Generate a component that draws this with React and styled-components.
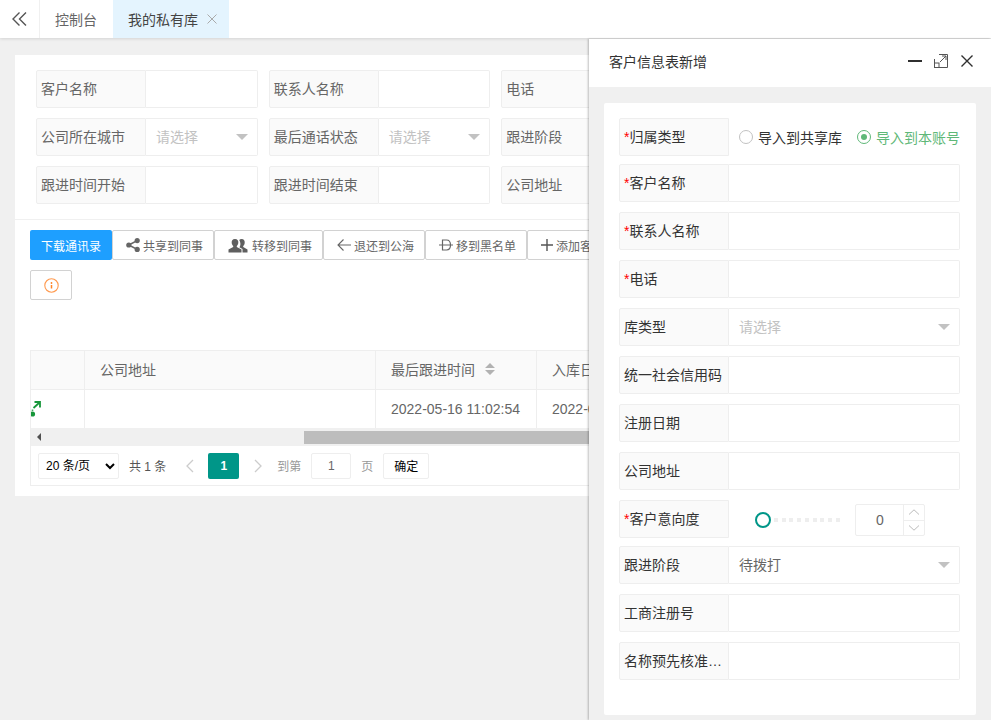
import React from 'react';
import styled, { createGlobalStyle } from 'styled-components';

const GlobalStyle = createGlobalStyle`
  html, body {
    margin: 0;
    padding: 0;
    background: #f0f0f0;
  }
  * {
    box-sizing: border-box;
  }
  body {
    font-family: "Liberation Sans", "Noto Sans CJK SC", sans-serif;
    font-size: 14px;
    color: #666;
  }
`;

const filterFields = [
  { label: '客户名称' },
  { label: '联系人名称' },
  { label: '电话' },
  { label: '公司所在城市', select: '请选择' },
  { label: '最后通话状态', select: '请选择' },
  { label: '跟进阶段', select: '请选择' },
  { label: '跟进时间开始' },
  { label: '跟进时间结束' },
  { label: '公司地址' },
];

const App = () => {
  return (
    <Page>
      <GlobalStyle />
      <TabBar>
        <BackTab>
          <svg width="15" height="14" viewBox="0 0 15 14" fill="none" stroke="#555" strokeWidth="1.4">
            <path d="M7.5 0.5 L1 7 L7.5 13.5" />
            <path d="M14 0.5 L7.5 7 L14 13.5" />
          </svg>
        </BackTab>
        <Tab>控制台</Tab>
        <Tab $active>
          我的私有库
          <svg width="10" height="10" viewBox="0 0 10 10" stroke="#aaa" strokeWidth="1">
            <path d="M0.5 0.5 L9.5 9.5 M9.5 0.5 L0.5 9.5" />
          </svg>
        </Tab>
      </TabBar>

      <Content>
        <Card>
          <FilterGrid>
            {filterFields.map((f) => (
              <Field key={f.label}>
                <FieldLabel $color="#666">{f.label}</FieldLabel>
                <FieldBody>
                  {f.select && <Placeholder>{f.select}</Placeholder>}
                  {f.select && <Caret />}
                </FieldBody>
              </Field>
            ))}
          </FilterGrid>

          <ToolArea>
            <Toolbar>
              <PrimaryButton>下载通讯录</PrimaryButton>
              <ToolButton>
                <svg width="14" height="14" viewBox="0 0 14 14" fill="#666" stroke="#666">
                  <circle cx="2.8" cy="7" r="2.6" stroke="none" />
                  <circle cx="11.2" cy="2.6" r="2.6" stroke="none" />
                  <circle cx="11.2" cy="11.4" r="2.6" stroke="none" />
                  <path d="M2.8 7 L11.2 2.6 M2.8 7 L11.2 11.4" strokeWidth="1.6" />
                </svg>
                共享到同事
              </ToolButton>
              <ToolButton $gap={4}>
                <svg width="20" height="15" viewBox="0 0 20 14" fill="#5f5f5f">
                  <path d="M13.5 0.5 C16 0.5 17 2.5 16.7 4.5 C16.5 6 15.8 7 15.2 7.5 L15.2 8.6 L19.5 11 L19.5 14 L14.5 14 L14.5 10.6 L11.4 8.8 C12.6 7.5 13 4.5 11.2 1.6 C11.8 0.9 12.6 0.5 13.5 0.5 Z" />
                  <path d="M7 0.5 C9.6 0.5 10.6 2.6 10.3 4.6 C10.1 6 9.4 7 8.8 7.5 L8.8 8.6 L13.5 11 L13.5 14 L0.5 14 L0.5 11 L5.2 8.6 L5.2 7.5 C4.6 7 3.9 6 3.7 4.6 C3.4 2.6 4.4 0.5 7 0.5 Z" />
                </svg>
                转移到同事
              </ToolButton>
              <ToolButton>
                <svg width="14" height="12" viewBox="0 0 14 12" fill="none" stroke="#666" strokeWidth="1.1">
                  <path d="M6.5 0.5 L1 6 L6.5 11.5 M1 6 L14 6" />
                </svg>
                退还到公海
              </ToolButton>
              <ToolButton>
                <svg width="14" height="12" viewBox="0 0 14 12" fill="none" stroke="#666" strokeWidth="1.2">
                  <path d="M3.5 1 L7.5 1 C10.3 1 11.5 3.2 11.5 6 C11.5 8.8 10.3 11 7.5 11 L3.5 11 Z M0 6 L14 6" />
                </svg>
                移到黑名单
              </ToolButton>
              <ToolButton>
                <svg width="12" height="12" viewBox="0 0 12 12" stroke="#555" strokeWidth="1.4">
                  <path d="M6 0 L6 12 M0 6 L12 6" />
                </svg>
                添加客户
              </ToolButton>
            </Toolbar>
            <InfoButton>
              <svg width="15" height="15" viewBox="0 0 15 15" fill="none">
                <circle cx="7.5" cy="7.5" r="6.7" stroke="#ff9a4f" strokeWidth="1.1" />
                <path d="M7.5 7 L7.5 10.5" stroke="#ff8426" strokeWidth="1.5" />
                <circle cx="7.5" cy="5" r="0.9" fill="#ff8426" />
              </svg>
            </InfoButton>
          </ToolArea>

          <TableWrap>
            <TableRow $head>
              <HeadCell $width={54} />
              <HeadCell $width={291}>公司地址</HeadCell>
              <HeadCell $width={161}>
                最后跟进时间
                <SortIcon viewBox="0 0 10 12" fill="#b2b2b2">
                  <path d="M5 0 L10 5 L0 5 Z M5 12 L0 7 L10 7 Z" />
                </SortIcon>
              </HeadCell>
              <HeadCell $width={200}>入库日期</HeadCell>
            </TableRow>
            <TableRow>
              <IconCell $width={54}>
                <svg width="10" height="16" viewBox="0 0 10 16" fill="none">
                  <path d="M2.5 7 L8.5 1.5 M3.5 1 L9 1 L9 6.5" stroke="#17963a" strokeWidth="1.8" />
                  <circle cx="1.5" cy="13" r="2.6" fill="#17963a" />
                  <path d="M1.5 9.8 L1.5 8.6" stroke="#17963a" strokeWidth="1.6" />
                </svg>
              </IconCell>
              <Cell $width={291} />
              <Cell $width={161}>2022-05-16 11:02:54</Cell>
              <Cell $width={200}>2022-05-16 11:02:54</Cell>
            </TableRow>
            <ScrollTrack>
              <ScrollArrow />
              <ScrollThumb />
            </ScrollTrack>
            <Pager>
              <PageSize defaultValue="20">
                <option value="10">10 条/页</option>
                <option value="20">20 条/页</option>
                <option value="50">50 条/页</option>
              </PageSize>
              <PagerText>共 1 条</PagerText>
              <PagerArrow>
                <svg width="9" height="14" viewBox="0 0 9 14" fill="none" stroke="#ccc" strokeWidth="1.3">
                  <path d="M8 1 L2 7 L8 13" />
                </svg>
              </PagerArrow>
              <CurrentPage>1</CurrentPage>
              <PagerArrow>
                <svg width="9" height="14" viewBox="0 0 9 14" fill="none" stroke="#ccc" strokeWidth="1.3">
                  <path d="M1 1 L7 7 L1 13" />
                </svg>
              </PagerArrow>
              <JumpLabel>到第</JumpLabel>
              <JumpInput defaultValue="1" />
              <JumpLabel $left={10}>页</JumpLabel>
              <JumpButton>确定</JumpButton>
            </Pager>
          </TableWrap>
        </Card>
      </Content>

      <Drawer>
        <DrawerHeader>
          <DrawerTitle>客户信息表新增</DrawerTitle>
          <DrawerActions>
            <svg width="14" height="2" viewBox="0 0 14 2" fill="#2f2f2f">
              <rect width="14" height="2" />
            </svg>
            <svg width="14" height="14" viewBox="0 0 14 14" fill="none" stroke="#555" strokeWidth="1">
              <path d="M5 0.5 L13.5 0.5 L13.5 13.5 L0.5 13.5 L0.5 5" />
              <rect x="0.5" y="9" width="4.5" height="4.5" />
              <path d="M6 8 L12 2 M8 2 L12 2 L12 6" />
            </svg>
            <svg width="13" height="12" viewBox="-1 0 13 12" stroke="#2f2f2f" strokeWidth="1.4">
              <path d="M0.5 0.5 L11.5 11.5 M11.5 0.5 L0.5 11.5" />
            </svg>
          </DrawerActions>
        </DrawerHeader>
        <DrawerBody>
          <FormCard>
            <FormRow $tight>
              <FieldLabel><Star>*</Star>归属类型</FieldLabel>
              <RadioGroup>
                <Radio />
                <RadioText>导入到共享库</RadioText>
                <Radio $on />
                <RadioText $on>导入到本账号</RadioText>
              </RadioGroup>
            </FormRow>
            <FormRow><FieldLabel><Star>*</Star>客户名称</FieldLabel><FieldBody /></FormRow>
            <FormRow><FieldLabel><Star>*</Star>联系人名称</FieldLabel><FieldBody /></FormRow>
            <FormRow><FieldLabel><Star>*</Star>电话</FieldLabel><FieldBody /></FormRow>
            <FormRow>
              <FieldLabel>库类型</FieldLabel>
              <FieldBody><Placeholder>请选择</Placeholder><Caret /></FieldBody>
            </FormRow>
            <FormRow><FieldLabel>统一社会信用码</FieldLabel><FieldBody /></FormRow>
            <FormRow><FieldLabel>注册日期</FieldLabel><FieldBody /></FormRow>
            <FormRow><FieldLabel>公司地址</FieldLabel><FieldBody /></FormRow>
            <FormRow $tight>
              <FieldLabel><Star>*</Star>客户意向度</FieldLabel>
              <SliderArea>
                <SliderTrack>
                  {Array.from({ length: 10 }).map((_, i) => <SliderDot key={i} />)}
                  <SliderThumb />
                </SliderTrack>
                <NumberBox>
                  <NumberValue>0</NumberValue>
                  <Steppers>
                    <Stepper>
                      <svg width="12" height="6" viewBox="0 0 12 6" fill="none" stroke="#bbb">
                        <path d="M1 5.5 L6 0.8 L11 5.5" />
                      </svg>
                    </Stepper>
                    <Stepper>
                      <svg width="12" height="6" viewBox="0 0 12 6" fill="none" stroke="#bbb">
                        <path d="M1 0.5 L6 5.2 L11 0.5" />
                      </svg>
                    </Stepper>
                  </Steppers>
                </NumberBox>
              </SliderArea>
            </FormRow>
            <FormRow>
              <FieldLabel>跟进阶段</FieldLabel>
              <FieldBody><SelectValue>待拨打</SelectValue><Caret /></FieldBody>
            </FormRow>
            <FormRow><FieldLabel>工商注册号</FieldLabel><FieldBody /></FormRow>
            <FormRow><FieldLabel>名称预先核准文号</FieldLabel><FieldBody /></FormRow>
          </FormCard>
        </DrawerBody>
      </Drawer>
    </Page>
  );
};

const Page = styled.div`
  position: relative;
  width: 991px;
  height: 720px;
  overflow: hidden;
  background: #f0f0f0;
`;

const TabBar = styled.div`
  display: flex;
  height: 38px;
  background: #fff;
  box-shadow: 0 1px 3px rgba(0, 0, 0, 0.12);
`;

const BackTab = styled.div`
  width: 40px;
  display: flex;
  align-items: center;
  justify-content: center;
  border-right: 1px solid #f0f0f0;
`;

const Tab = styled.div`
  display: flex;
  align-items: center;
  gap: 9px;
  padding: 0 15px;
  background: ${(p) => (p.$active ? '#e4f4fe' : '#fff')};
  color: ${(p) => (p.$active ? '#444' : '#666')};
  padding-right: ${(p) => (p.$active ? '12px' : '16px')};
`;

const Content = styled.div`
  padding: 17px 15px;
`;

const Card = styled.div`
  background: #fff;
  height: 441px;
`;

const FilterGrid = styled.div`
  display: grid;
  grid-template-columns: repeat(3, 221.67px);
  gap: 10px 11px;
  padding: 15px 21px;
  border-bottom: 1px solid #f0f0f0;
  height: 165px;
`;

const Field = styled.div`
  display: flex;
  height: 38px;
`;

const FormRow = styled(Field)`
  margin-bottom: ${(p) => (p.$tight ? '8px' : '10px')};
  &:last-child {
    margin-bottom: 0;
  }
`;

const FieldLabel = styled.div`
  flex: none;
  width: 110px;
  padding: 0 4px;
  line-height: 36px;
  background: #fafafa;
  border: 1px solid #eee;
  border-radius: 2px 0 0 2px;
  color: ${(p) => p.$color || '#333'};
  white-space: nowrap;
  overflow: hidden;
  text-overflow: ellipsis;
`;

const Star = styled.span`
  color: #f00;
`;

const FieldBody = styled.div`
  position: relative;
  flex: 1;
  display: flex;
  align-items: center;
  padding: 0 0 2px 10px;
  border: 1px solid #eee;
  border-left: none;
  border-radius: 0 2px 2px 0;
`;

const Placeholder = styled.span`
  color: #c2c2c2;
`;

const SelectValue = styled.span`
  color: #666;
`;

const Caret = styled.i`
  position: absolute;
  right: 9px;
  top: 15px;
  width: 0;
  height: 0;
  border-style: solid;
  border-width: 6px 6px 0;
  border-color: #c2c2c2 transparent transparent;
`;

const ToolArea = styled.div`
  padding: 10px 15px 0;
  height: 130px;
`;

const Toolbar = styled.div`
  display: flex;
  white-space: nowrap;
  height: 30px;
`;

const PrimaryButton = styled.button`
  height: 30px;
  padding: 0 11px;
  border: none;
  border-radius: 2px;
  background: #1e9fff;
  color: #fff;
  font: inherit;
  font-size: 12px;
`;

const ToolButton = styled.button`
  flex: none;
  display: flex;
  align-items: center;
  gap: ${(p) => p.$gap || 3}px;
  height: 30px;
  padding: 0 10px 0 13px;
  border: 1px solid #d2d2d2;
  border-radius: 2px;
  background: #fff;
  color: #666;
  font: inherit;
  font-size: 12px;
`;

const InfoButton = styled.button`
  display: flex;
  align-items: center;
  justify-content: center;
  width: 42px;
  height: 30px;
  margin-top: 10px;
  padding: 0;
  border: 1px solid #d2d2d2;
  border-radius: 2px;
  background: #fff;
`;

const TableWrap = styled.div`
  margin: 0 15px;
  border-left: 1px solid #eee;
  overflow: hidden;
`;

const TableRow = styled.div`
  display: flex;
  height: ${(p) => (p.$head ? '40px' : '38px')};
  background: ${(p) => (p.$head ? '#fafafa' : '#fff')};
  border-top: ${(p) => (p.$head ? '1px solid #eee' : 'none')};
  border-bottom: ${(p) => (p.$head ? '1px solid #eee' : 'none')};
`;

const Cell = styled.div`
  flex: none;
  display: flex;
  align-items: center;
  width: ${(p) => p.$width}px;
  padding-left: 15px;
  border-right: 1px solid #eee;
  white-space: nowrap;
  overflow: hidden;
`;

const HeadCell = styled(Cell)`
  padding-bottom: 2px;
`;

const IconCell = styled(Cell)`
  padding-left: 0;
`;

const SortIcon = styled.svg`
  width: 10px;
  height: 12px;
  margin-left: 10px;
`;

const ScrollTrack = styled.div`
  position: relative;
  height: 18px;
  background: #f0f0f0;
`;

const ScrollArrow = styled.i`
  position: absolute;
  left: 6px;
  top: 5px;
  border-style: solid;
  border-width: 4px 4px 4px 0;
  border-color: transparent #505050 transparent transparent;
`;

const ScrollThumb = styled.div`
  position: absolute;
  left: 273px;
  top: 3px;
  width: 500px;
  height: 13px;
  background: #bdbdbd;
`;

const Pager = styled.div`
  display: flex;
  align-items: center;
  height: 40px;
  padding-left: 7px;
  font-size: 12px;
  border-bottom: 1px solid #eee;
`;

const PageSize = styled.select`
  width: 81px;
  height: 26px;
  padding: 0 0 0 3px;
  border: 1px solid #eee;
  border-radius: 2px;
  background: #fff;
  color: #000;
  font-family: inherit;
  font-size: 12px;
`;

const PagerText = styled.span`
  margin: 0 12px 0 10px;
  color: #555;
`;

const PagerArrow = styled.span`
  display: flex;
  width: 22px;
  justify-content: center;
`;

const CurrentPage = styled.span`
  width: 31px;
  height: 26px;
  margin: 0 8px;
  background: #009688;
  color: #fff;
  border-radius: 2px;
  text-align: center;
  line-height: 26px;
  font-weight: bold;
`;

const JumpLabel = styled.span`
  margin-left: ${(p) => p.$left || 8}px;
  color: #999;
`;

const JumpInput = styled.input`
  width: 40px;
  height: 26px;
  margin-left: 10px;
  border: 1px solid #eee;
  border-radius: 2px;
  color: #666;
  text-align: center;
  font: inherit;
  font-size: 12px;
  outline: none;
`;

const JumpButton = styled.button`
  width: 46px;
  height: 26px;
  margin-left: 10px;
  padding: 0;
  border: 1px solid #eee;
  border-radius: 2px;
  background: #fff;
  color: #000;
  font: inherit;
  font-size: 12px;
`;

const Drawer = styled.aside`
  position: absolute;
  top: 39px;
  left: 589px;
  bottom: 0;
  width: 402px;
  display: flex;
  flex-direction: column;
  background: #f0f0f0;
  box-shadow: -1px 0 2px rgba(0, 0, 0, 0.25);
`;

const DrawerHeader = styled.div`
  flex: none;
  display: flex;
  align-items: center;
  justify-content: space-between;
  height: 48px;
  padding: 0 18px 4px 20px;
  background: #fff;
`;

const DrawerTitle = styled.div`
  color: #333;
`;

const DrawerActions = styled.div`
  display: flex;
  align-items: center;
  gap: 12px;
`;

const DrawerBody = styled.div`
  flex: 1;
  padding: 16px 15px 5px;
`;

const FormCard = styled.div`
  height: 612px;
  padding: 15px 16px 0 15px;
  background: #fff;
  border-radius: 2px;
`;

const RadioGroup = styled.div`
  flex: 1;
  display: flex;
  align-items: center;
  padding-left: 10px;
  font-size: 14px;
`;

const Radio = styled.i`
  position: relative;
  flex: none;
  width: 14px;
  height: 14px;
  margin-right: 5px;
  border: 1px solid ${(p) => (p.$on ? '#5fb878' : '#c2c2c2')};
  border-radius: 50%;
  &::after {
    content: '';
    display: ${(p) => (p.$on ? 'block' : 'none')};
    position: absolute;
    left: 3px;
    top: 3px;
    width: 6px;
    height: 6px;
    border-radius: 50%;
    background: #5fb878;
  }
`;

const RadioText = styled.span`
  margin-right: 15px;
  color: ${(p) => (p.$on ? '#5fb878' : '#333')};
  white-space: nowrap;
`;

const SliderArea = styled.div`
  flex: 1;
  display: flex;
  align-items: center;
  padding: 2px 0 0 27px;
`;

const SliderTrack = styled.div`
  position: relative;
  display: flex;
  align-items: center;
  justify-content: space-between;
  width: 84px;
  height: 4px;
  padding-left: 10px;
`;

const SliderDot = styled.i`
  width: 4px;
  height: 4px;
  background: #eee;
`;

const SliderThumb = styled.i`
  position: absolute;
  left: -1px;
  top: -6px;
  width: 16px;
  height: 16px;
  border: 2px solid #009688;
  border-radius: 50%;
  background: #fff;
`;

const NumberBox = styled.div`
  display: flex;
  width: 70px;
  height: 32px;
  margin-left: 15px;
  border: 1px solid #eee;
  border-radius: 2px;
`;

const NumberValue = styled.div`
  flex: 1;
  padding-left: 1px;
  line-height: 30px;
  text-align: center;
  color: #666;
`;

const Steppers = styled.div`
  display: flex;
  flex-direction: column;
  width: 21px;
  border-left: 1px solid #eee;
`;

const Stepper = styled.div`
  flex: 1;
  display: flex;
  align-items: center;
  justify-content: center;
  &:first-child {
    border-bottom: 1px solid #eee;
  }
`;

export default App;
